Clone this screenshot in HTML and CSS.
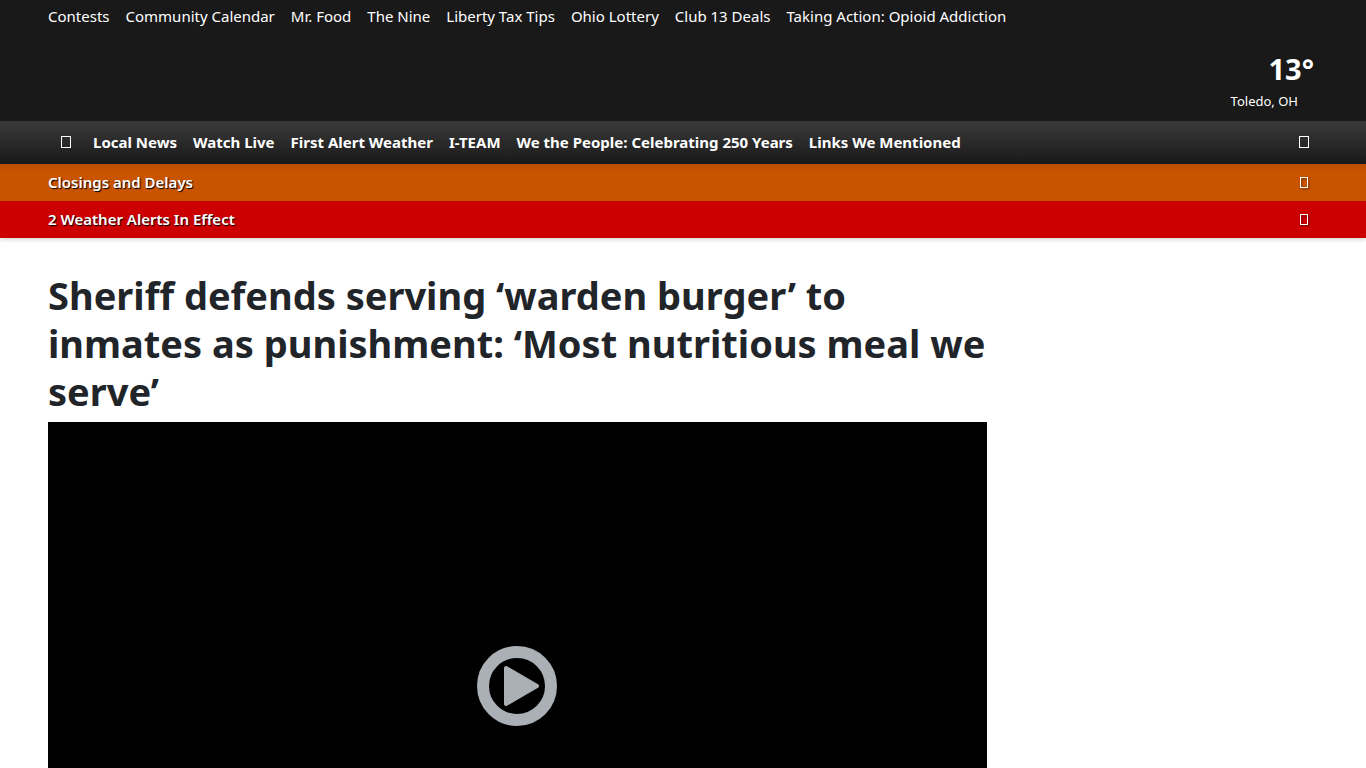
FILE: index.html
```html
<!DOCTYPE html>
<html lang="en">
<head>
<meta charset="utf-8">
<meta name="viewport" content="width=device-width, initial-scale=1">
<title>Sheriff defends serving ‘warden burger’ to inmates as punishment</title>
<link rel="stylesheet" href="styles.css">
</head>
<body>
<header class="site-header">
  <div class="masthead">
    <nav class="top-links" aria-label="Featured">
      <a href="#">Contests</a>
      <a href="#">Community Calendar</a>
      <a href="#">Mr. Food</a>
      <a href="#">The Nine</a>
      <a href="#">Liberty Tax Tips</a>
      <a href="#">Ohio Lottery</a>
      <a href="#">Club 13 Deals</a>
      <a href="#">Taking Action: Opioid Addiction</a>
    </nav>
    <a class="weather" href="#">
      <span class="temperature">13°</span>
      <span class="city">Toledo, OH</span>
    </a>
  </div>
  <div class="main-bar">
    <nav class="main-nav" aria-label="Main">
      <a class="home" href="#" aria-label="Home"><svg class="icon" width="10" height="12" viewBox="0 0 10 12"><rect x=".5" y=".5" width="9" height="11"/></svg></a>
      <a href="#">Local News</a>
      <a href="#">Watch Live</a>
      <a href="#">First Alert Weather</a>
      <a href="#">I-TEAM</a>
      <a href="#">We the People: Celebrating 250 Years</a>
      <a href="#">Links We Mentioned</a>
    </nav>
    <button class="search" type="button" aria-label="Search"><svg class="icon" width="10" height="12" viewBox="0 0 10 12"><rect x=".5" y=".5" width="9" height="11"/></svg></button>
  </div>
  <a class="alert closings" href="#">
    <span>Closings and Delays</span>
    <svg class="icon" width="8" height="11" viewBox="0 0 8 11"><rect x=".5" y=".5" width="7" height="10"/></svg>
  </a>
  <a class="alert warnings" href="#">
    <span>2 Weather Alerts In Effect</span>
    <svg class="icon" width="8" height="11" viewBox="0 0 8 11"><rect x=".5" y=".5" width="7" height="10"/></svg>
  </a>
</header>
<main class="page">
  <article class="story">
    <h1>Sheriff defends serving ‘warden burger’ to inmates as punishment: ‘Most nutritious meal we serve’</h1>
    <div class="player">
      <button class="play" type="button" aria-label="Play video">
        <svg width="80" height="80" viewBox="0 0 80 80">
          <circle cx="40" cy="40" r="34" fill="none" stroke="#abb0b6" stroke-width="12"/>
          <path d="M29 22L60 40L29 58Z" fill="#abb0b6" stroke="#abb0b6" stroke-width="4" stroke-linejoin="round"/>
        </svg>
      </button>
    </div>
  </article>
</main>
</body>
</html>
```

FILE: styles.css
```css
* {
  box-sizing: border-box;
}

body {
  margin: 0;
  background: #fff;
  color: #212529;
  font-family: "Segoe UI", "Noto Sans", sans-serif;
  font-size: 15px;
  line-height: 24px;
}

a {
  color: inherit;
  text-decoration: none;
}

button {
  padding: 0;
  border: 0;
  background: none;
  color: inherit;
  cursor: pointer;
}

.icon {
  display: block;
  fill: none;
  stroke: currentColor;
}

.site-header {
  color: #fff;
  box-shadow: 0 2px 4px rgba(0, 0, 0, 0.15);
}

.masthead {
  display: flex;
  flex-direction: column;
  padding: 4px 48px 8px;
  background: #191919;
}

.top-links,
.main-nav {
  display: flex;
  column-gap: 16px;
  white-space: nowrap;
}

.weather {
  display: flex;
  flex-direction: column;
  align-self: flex-end;
  align-items: flex-end;
  margin-top: 21px;
}

.temperature {
  padding-right: 4px;
  font-size: 29px;
  font-weight: 700;
  line-height: 40px;
}

.city {
  padding-right: 20px;
  font-size: 13px;
}

.main-bar {
  display: flex;
  align-items: center;
  justify-content: space-between;
  padding: 9px 57px 10px 48px;
  background: linear-gradient(#3a3a3a, #191919);
  font-weight: 700;
}

.home {
  display: flex;
  align-items: center;
  padding: 0 6px 0 13px;
}

.alert {
  display: flex;
  align-items: center;
  justify-content: space-between;
  padding: 6px 58px 7px 48px;
  font-weight: 600;
  text-shadow: 1px 1px 1px #000;
}

.alert .icon {
  filter: drop-shadow(1px 1px 1px rgba(0, 0, 0, 0.6));
}

.closings {
  background: linear-gradient(#b84d00, #c85400 8px);
}

.warnings {
  background: #c00;
}

.page {
  padding: 33px 48px 0;
}

.story {
  width: calc(75% - 14px);
}

h1 {
  margin: 0 0 7px;
  font-size: 38px;
  font-weight: 700;
  line-height: 48px;
}

.player {
  display: flex;
  align-items: center;
  justify-content: center;
  aspect-ratio: 16 / 9;
  background: #000;
}

.play svg {
  display: block;
}
```
